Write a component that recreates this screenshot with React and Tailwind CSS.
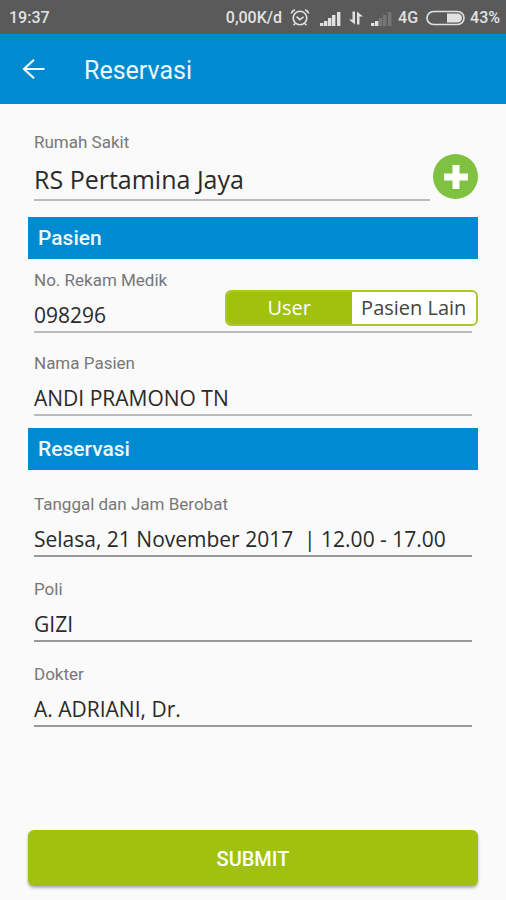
import { useState } from "react";

const VALUE_FONT = "font-['Open_Sans','Noto_Sans',sans-serif]";

function AlarmIcon() {
  return (
    <svg viewBox="0 0 20 20" className="h-5 w-5" fill="none" stroke="currentColor" strokeWidth="1.6" aria-hidden="true">
      <circle cx="10" cy="10" r="6.8" />
      <path d="M6.6 8.6 9.8 11.600l3.800-2.800" />
      <path d="M1.200 5.500A6 6 0 0 1 5 1.700M18.800 5.500A6 6 0 0 0 15 1.700M5 15.500l-1.400 1.800M15 15.500l1.400 1.800" />
    </svg>
  );
}

function SignalIcon({ strength, className }) {
  const bars = [
    [0, 3],
    [4, 5],
    [8, 8],
    [12, 11],
    [17, 14],
  ];
  return (
    <svg viewBox="0 0 21 15" className={className} fill="currentColor" aria-hidden="true">
      {bars.map(([x, h], i) => (
        <rect key={x} x={x} y={15 - h} width="3.4" height={h} opacity={i < strength ? 1 : 0.2} />
      ))}
    </svg>
  );
}

function DataIcon() {
  return (
    <svg viewBox="0 0 14 14" className="h-3.5 w-3.5" fill="currentColor" aria-hidden="true">
      <path d="M3.500 0.500h2.500V13.500L0 8.500h3.500zM8 13.500V0.500l6 5h-3.500v8z" />
    </svg>
  );
}

function BatteryIcon() {
  return (
    <svg viewBox="0 0 39 16" className="h-4 w-[39px]" aria-hidden="true">
      <rect x="1" y="1.5" width="37" height="13" rx="6.5" fill="none" stroke="currentColor" strokeWidth="1.6" />
      <path d="M21 3.500h10.500a4.500 4.500 0 0 1 0 9H21z" fill="currentColor" />
    </svg>
  );
}

function StatusBar() {
  return (
    <div className="flex h-[34px] items-center bg-[#5a5a5a] pt-0.5 pr-1.5 pl-[9px] text-base font-medium text-[#e2e2e2]">
      <span className="flex-1">19:37</span>
      <span>0,00K/d</span>
      <span className="ml-2"><AlarmIcon /></span>
      <SignalIcon strength={5} className="ml-2.5 h-[15px] w-[21px]" />
      <span className="ml-2"><DataIcon /></span>
      <SignalIcon strength={2} className="ml-2 h-[15px] w-[21px]" />
      <span className="ml-1.5">4G</span>
      <span className="ml-2"><BatteryIcon /></span>
      <span className="ml-[5px]">43%</span>
    </div>
  );
}

function Field({ id, label, value, large = false, dark = false }) {
  return (
    <div className="flex flex-col">
      <label htmlFor={id} className="text-[17px] leading-5 text-[#777]">
        {label}
      </label>
      <input
        id={id}
        type="text"
        defaultValue={value}
        className={`${VALUE_FONT} w-full border-b-2 bg-transparent text-[#2a2a2a] outline-none ${
          dark ? "border-[#999]" : "border-[#bbb]"
        } ${large ? "h-[49px] pt-1.5 text-[25px]" : "h-[43px] pt-2 text-[21px]"}`}
      />
    </div>
  );
}

function Banner({ children }) {
  return (
    <h2 className="flex h-[42px] items-center bg-[#008bd0] px-2.5 pt-0.5 text-[21px] font-medium text-[#eef8fd]">
      {children}
    </h2>
  );
}

function PatientToggle() {
  const [selected, setSelected] = useState("User");
  return (
    <div
      role="radiogroup"
      aria-label="Pasien"
      className={`${VALUE_FONT} absolute top-5 right-0 grid h-9 w-[253px] grid-cols-2 overflow-hidden rounded-md border-2 border-[#a8c92a] bg-white text-xl`}
    >
      {["User", "Pasien Lain"].map((option) => (
        <label
          key={option}
          className="relative flex cursor-pointer items-center justify-center text-[#444] has-checked:bg-[#a0c20f] has-checked:text-white"
        >
          <input
            type="radio"
            name="patient"
            value={option}
            checked={selected === option}
            onChange={() => setSelected(option)}
            className="sr-only"
          />
          {option}
        </label>
      ))}
    </div>
  );
}

export default function App() {
  return (
    <div className="flex min-h-screen flex-col bg-[#fafafa] font-['Roboto',sans-serif]">
      <StatusBar />
      <header className="flex h-[70px] items-center bg-[#008bd0] pl-[22px] text-[#eef8fd]">
        <button type="button" aria-label="Kembali" className="mr-[38px]">
          <svg viewBox="0 0 24 20" className="h-5 w-6" fill="none" stroke="currentColor" strokeWidth="2.2" aria-hidden="true">
            <path d="M22.5 10H2M12 0.8 2 10l10 9.2" />
          </svg>
        </button>
        <h1 className="pt-1 text-[25px] leading-8">Reservasi</h1>
      </header>
      <form className="flex flex-1 flex-col px-7 pt-7 pb-3.5" onSubmit={(e) => e.preventDefault()}>
        <div className="flex items-end gap-[3px] pl-1.5">
          <div className="flex-1">
            <Field id="hospital" label="Rumah Sakit" value="RS Pertamina Jaya" large />
          </div>
          <button
            type="button"
            aria-label="Tambah rumah sakit"
            className="mb-0.5 flex h-[45px] w-[45px] items-center justify-center rounded-full bg-[#7fc241] text-white"
          >
            <svg viewBox="0 0 26 26" className="h-[26px] w-[26px]" fill="currentColor" aria-hidden="true">
              <path d="M9.5 1h7v8.5H25v7h-8.500V25h-7v-8.500H1v-7h8.500z" />
            </svg>
          </button>
        </div>

        <section className="mt-4">
          <Banner>Pasien</Banner>
          <div className="relative mt-[11px]">
            <div className="px-1.5">
              <Field id="record" label="No. Rekam Medik" value="098296" />
            </div>
            <PatientToggle />
          </div>
          <div className="mt-5 px-1.5">
            <Field id="patient-name" label="Nama Pasien" value="ANDI PRAMONO TN" />
          </div>
        </section>

        <section className="mt-3">
          <Banner>Reservasi</Banner>
          <div className="mt-6 flex flex-col gap-[22px] px-1.5">
            <Field id="schedule" label="Tanggal dan Jam Berobat" value="Selasa, 21 November 2017  | 12.00 - 17.00" dark />
            <Field id="clinic" label="Poli" value="GIZI" dark />
            <Field id="doctor" label="Dokter" value="A. ADRIANI, Dr." dark />
          </div>
        </section>

        <div className="mt-auto pt-8">
          <button
            type="submit"
            className="h-14 w-full rounded-md bg-[#a0c20f] pt-0.5 text-xl font-medium text-white shadow-[0_2px_3px_rgba(0,0,0,0.3)]"
          >
            SUBMIT
          </button>
        </div>
      </form>
    </div>
  );
}
